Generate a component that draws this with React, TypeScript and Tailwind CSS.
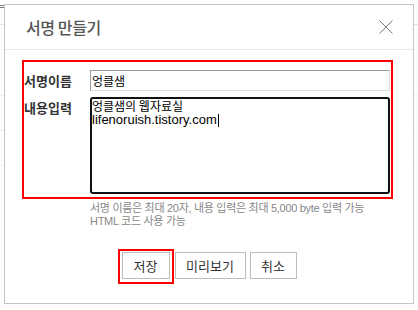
import React from "react";

const KR = { fontFamily: '"Noto Sans CJK KR", "Noto Sans", sans-serif' };
const MIX = { fontFamily: '"Liberation Sans", "Noto Sans CJK KR", sans-serif' };

function CloseIcon() {
  return (
    <svg width="14" height="14" viewBox="0 0 14 14" className="text-[#777]">
      <path d="M0.5 0.5 L13.5 13.5 M13.5 0.5 L0.5 13.5" stroke="currentColor" strokeWidth="1" fill="none" />
    </svg>
  );
}

export default function App() {
  return (
    <div className="relative w-[418px] h-[310px] bg-white overflow-hidden">
      {/* page behind the dialog */}
      <div className="absolute left-0 top-[5px] w-[5px] h-[3px] border-t border-b border-[#777]" />
      <div className="absolute left-0 top-[24px] w-full h-px bg-[#e4e4e4]" />
      <div className="absolute left-0 top-[130px] w-full h-px bg-[#ededed]" />
      <div className="absolute left-0 top-[95px] w-full h-px bg-[#f0f0f0]" />
      <div className="absolute left-0 top-[165px] w-full h-px bg-[#f0f0f0]" />

      {/* dialog */}
      <div className="absolute left-[4px] top-[4px] w-[410px] h-[300px] bg-white border border-[#c4c4c4] flex flex-col">
        <div className="h-[45px] shrink-0 flex items-center justify-between pl-[21px] pr-[20px] border-b border-[#e6e6e6]">
          <h2 style={KR} className="text-[16px] font-medium tracking-[-0.4px] text-[#555] leading-none">
            서명 만들기
          </h2>
          <button aria-label="닫기" className="w-[14px] h-[14px] flex items-center justify-center">
            <CloseIcon />
          </button>
        </div>

        <div className="mt-[10px] ml-[17px] w-[371px] border-2 border-[#ff0000] pt-[8px] pb-[3px] pr-[1px]">
          <div className="flex items-center">
            <label style={KR} className="w-[66px] shrink-0 text-[13px] font-bold text-[#333] leading-[16px]">
              서명이름
            </label>
            <input
              defaultValue="엉클샘"
              style={KR}
              className="w-[300px] h-[21px] px-px text-[12px] text-black border border-[#9c9c9c] border-r-[#dcdcdc] border-b-[#dcdcdc] outline-none"
            />
          </div>
          <div className="flex items-start mt-[6px]">
            <label style={KR} className="w-[66px] shrink-0 pt-[3px] text-[13px] font-bold text-[#333] leading-[16px]">
              내용입력
            </label>
            <div
              style={MIX}
              className="w-[300px] h-[97px] border-2 border-[#111] rounded-[3px] text-[13px] text-black"
            >
              <div style={KR} className="text-[12px] leading-[14px]">
                엉클샘의 웹자료실
              </div>
              <div className="flex items-center leading-[14px]">
                lifenoruish.tistory.com
                <span className="inline-block w-px h-[13px] bg-black ml-px" />
              </div>
            </div>
          </div>
        </div>

        <div style={MIX} className="pl-[85px] mt-[3px] text-[11px] leading-[13px] tracking-[-0.3px] text-[#888]">
          <p>서명 이름은 최대 20자, 내용 입력은 최대 5,000 byte 입력 가능</p>
          <p>HTML 코드 사용 가능</p>
        </div>

        <div className="flex justify-center gap-1 mt-[24px]">
          <div className="relative mr-px">
            <button style={KR} className="w-[48px] h-[27px] border border-[#bdbdbd] bg-white text-[13px] text-[#333]">
              저장
            </button>
            <div className="absolute -left-[4px] -right-[4px] -top-[3px] -bottom-[5px] border-2 border-[#ff0000] pointer-events-none" />
          </div>
          <button style={KR} className="w-[71px] h-[27px] border border-[#bdbdbd] bg-white text-[13px] text-[#333]">
            미리보기
          </button>
          <button style={KR} className="w-[47px] h-[27px] border border-[#bdbdbd] bg-white text-[13px] text-[#333]">
            취소
          </button>
        </div>
      </div>
    </div>
  );
}
